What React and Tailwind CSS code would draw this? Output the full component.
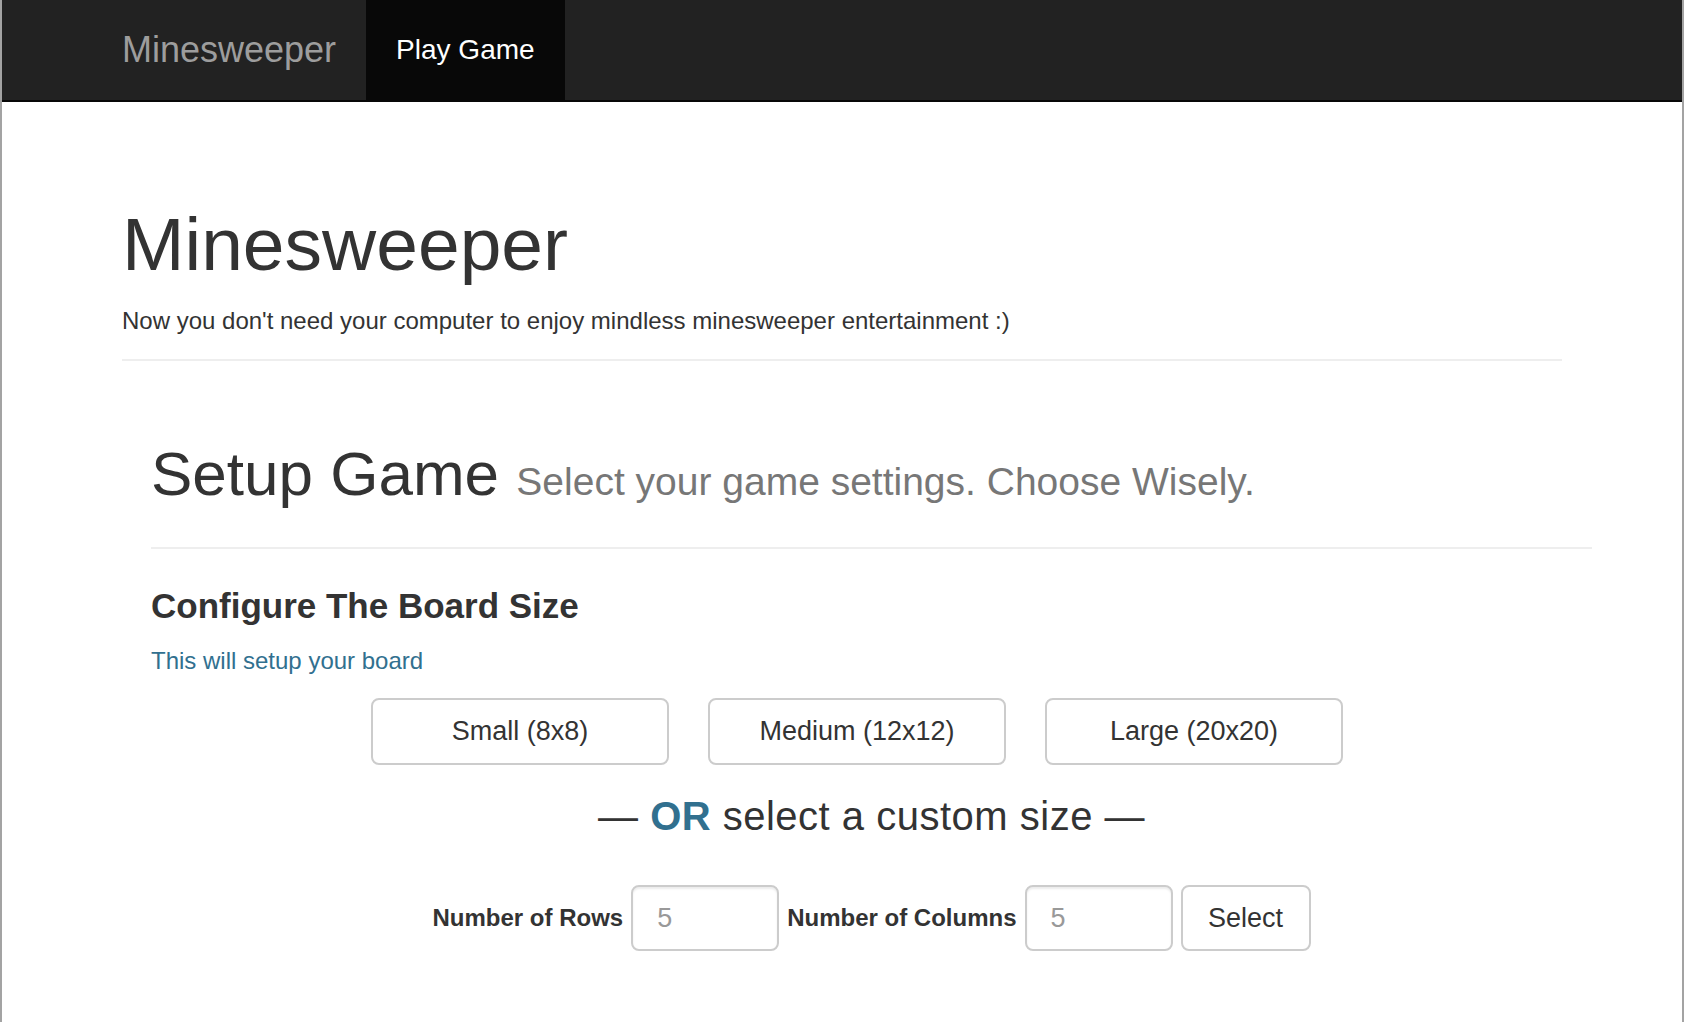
export default function App() {
  return (
    <div className="min-h-screen bg-white border-x-2 border-[#a3a3a3] font-['Liberation_Sans',Arial,sans-serif] text-[#333]">
      {/* Navbar */}
      <nav className="h-[102px] bg-[#222] border-b-2 border-[#080808]">
        <div className="w-[1500px] mx-auto flex h-full">
          <a className="px-[30px] text-[36px] leading-[100px] text-[#9d9d9d]">Minesweeper</a>
          <a className="px-[30px] text-[28px] leading-[100px] text-white bg-[#080808]">Play Game</a>
        </div>
      </nav>

      <div className="w-[1500px] mx-auto px-[30px]">
        {/* Jumbotron */}
        <h1 className="mt-[100px] text-[75px] leading-[84px]">Minesweeper</h1>
        <p className="mt-[19px] text-[24px] leading-[32px]">
          Now you don't need your computer to enjoy mindless minesweeper entertainment :)
        </p>
        <div className="mt-[22px] h-[2px] bg-[#eee]" />

        {/* Setup section */}
        <section className="ml-[29px] mr-[-30px]">
          <h1 className="mt-[80px] text-[62px] leading-[66px]">
            Setup Game{" "}
            <span className="text-[39px] leading-none text-[#777]">Select your game settings. Choose Wisely.</span>
          </h1>
          <div className="mt-[40px] h-[2px] bg-[#eee]" />

          <h3 className="mt-[37px] text-[35px] leading-[40px] font-bold">Configure The Board Size</h3>
          <p className="mt-[20px] text-[24px] leading-[30px] text-[#31708f]">This will setup your board</p>

          <div className="mt-[22px] pl-[220px] flex gap-[39px]">
            {["Small (8x8)", "Medium (12x12)", "Large (20x20)"].map((s) => (
              <button
                key={s}
                className="w-[298px] h-[67px] border-2 border-[#ccc] rounded-[8px] bg-white text-[27px] text-[#333]"
              >
                {s}
              </button>
            ))}
          </div>

          <div className="mt-[28px] text-center text-[40px] leading-[46px] tracking-[0.5px]">
            — <span className="font-bold text-[#31708f]">OR</span> select a custom size —
          </div>

          <div className="mt-[46px] flex justify-center items-center gap-2">
            <label className="text-[24px] font-bold">Number of Rows</label>
            <input
              placeholder="5"
              className="w-[148px] h-[66px] px-[24px] border-2 border-[#ccc] rounded-[8px] text-[27px] placeholder:text-[#999] shadow-[inset_0_2px_2px_rgba(0,0,0,0.075)] outline-none"
            />
            <label className="text-[24px] font-bold">Number of Columns</label>
            <input
              placeholder="5"
              className="w-[148px] h-[66px] px-[24px] border-2 border-[#ccc] rounded-[8px] text-[27px] placeholder:text-[#999] shadow-[inset_0_2px_2px_rgba(0,0,0,0.075)] outline-none"
            />
            <button className="w-[130px] h-[66px] border-2 border-[#ccc] rounded-[8px] bg-white text-[27px] text-[#333]">
              Select
            </button>
          </div>
        </section>
      </div>
    </div>
  );
}
